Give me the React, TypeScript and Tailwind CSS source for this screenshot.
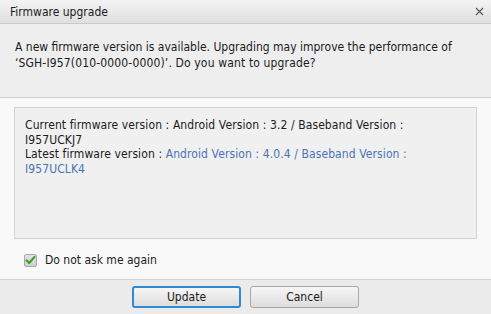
import React, { useState } from 'react';

const FirmwareUpgradeDialog: React.FC = () => {
  const [dontAsk, setDontAsk] = useState(true);

  return (
    <div
      className="w-[491px] h-[314px] flex flex-col bg-[#f9f9f9] text-[12px] text-[#1b1b1b] overflow-hidden"
      style={{ fontFamily: '"DejaVu Sans Condensed", "DejaVu Sans", Verdana, sans-serif' }}
    >
      {/* title bar */}
      <div className="h-[24px] flex items-center justify-between pl-[10px] pr-[7px] bg-gradient-to-b from-[#f3f3f3] to-[#dfdfdf] border-b border-[#c9c9c9]">
        <span>Firmware upgrade</span>
        <svg width="9" height="9" viewBox="0 0 9 9" className="text-[#555]">
          <path d="M1 1 L8 8 M8 1 L1 8" stroke="currentColor" strokeWidth="1.1" />
        </svg>
      </div>

      {/* message */}
      <div className="h-[74px] bg-[#eeeeee] border-b border-[#d2d2d2] pl-[15px] pr-[10px] pt-[15px] leading-[16px]">
        <p>A new firmware version is available. Upgrading may improve the performance of</p>
        <p className="tracking-[0.15px]">‘SGH-I957(010-0000-0000)’. Do you want to upgrade?</p>
      </div>

      {/* details */}
      <div className="flex-1 flex flex-col px-[14px] pt-[9px]">
        <div className="h-[132px] bg-[#f0f0f0] border border-[#d3d3d3] px-[10px] pt-[10px] leading-[14.5px] tracking-[0.1px]">
          <p>Current firmware version : Android Version : 3.2 / Baseband Version :</p>
          <p>I957UCKJ7</p>
          <p>
            Latest firmware version :{' '}
            <span className="text-[#4a72b8]">Android Version : 4.0.4 / Baseband Version :</span>
          </p>
          <p className="text-[#4a72b8]">I957UCLK4</p>
        </div>

        <label className="flex items-center gap-[8px] mt-[12px] ml-[10px] cursor-pointer">
          <button
            type="button"
            onClick={() => setDontAsk(!dontAsk)}
            className="w-[13px] h-[13px] rounded-[2px] border border-[#a9a9a9] bg-gradient-to-b from-[#e4e4e4] to-[#cfcfcf] flex items-center justify-center"
          >
            {dontAsk && (
              <svg width="11" height="10" viewBox="0 0 11 10">
                <path d="M1.5 5.2 L4.2 8 L9.5 1.8" fill="none" stroke="#3f9a2c" strokeWidth="2" strokeLinecap="round" strokeLinejoin="round" />
              </svg>
            )}
          </button>
          <span>Do not ask me again</span>
        </label>
      </div>

      {/* footer */}
      <div className="h-[35px] bg-[#ebebeb] border-t border-[#d3d3d3] flex items-center justify-center gap-[9px] pb-[1px]">
        <button className="w-[109px] h-[22px] rounded-[3px] border-2 border-[#2f8ad6] bg-gradient-to-b from-[#f6f6f6] to-[#dddddd] leading-none">
          Update
        </button>
        <button className="w-[109px] h-[22px] rounded-[3px] border border-[#a7a7a7] bg-gradient-to-b from-[#f6f6f6] to-[#dddddd] leading-none">
          Cancel
        </button>
      </div>
    </div>
  );
};

export default function App() {
  return <FirmwareUpgradeDialog />;
}
